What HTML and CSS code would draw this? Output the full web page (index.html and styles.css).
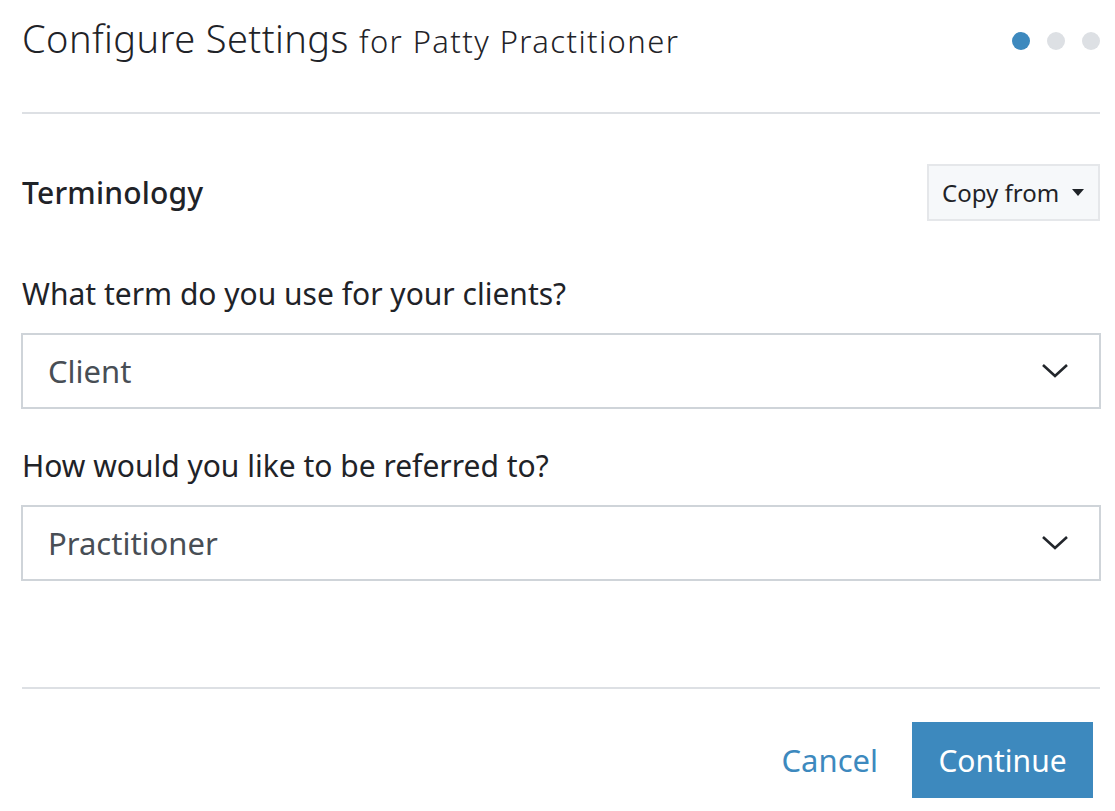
FILE: index.html
```html
<!DOCTYPE html>
<html>
<head>
<meta charset="utf-8">
<link rel="stylesheet" href="styles.css">
</head>
<body>
<div class="modal">
  <header class="head">
    <h1 class="title">Configure Settings <span class="sub">for Patty Practitioner</span></h1>
    <div class="dots"><span class="dot active"></span><span class="dot"></span><span class="dot"></span></div>
  </header>
  <hr class="rule">
  <section class="body">
    <div class="section-head">
      <h2 class="section-title">Terminology</h2>
      <button class="copy">Copy from <span class="caret"></span></button>
    </div>
    <label class="label">What term do you use for your clients?</label>
    <div class="select"><span>Client</span>
      <svg class="chev" width="28" height="16" viewBox="0 0 28 16"><path d="M2 2 L14 13 L26 2" fill="none" stroke="#22262b" stroke-width="2.6"/></svg>
    </div>
    <label class="label second">How would you like to be referred to?</label>
    <div class="select"><span>Practitioner</span>
      <svg class="chev" width="28" height="16" viewBox="0 0 28 16"><path d="M2 2 L14 13 L26 2" fill="none" stroke="#22262b" stroke-width="2.6"/></svg>
    </div>
  </section>
  <hr class="rule bottom">
  <footer class="foot">
    <button class="cancel">Cancel</button>
    <button class="continue">Continue</button>
  </footer>
</div>
</body>
</html>
```
FILE: styles.css
```css
* { box-sizing: border-box; }
body { margin: 0; background: #fff; font-family: "Noto Sans", "Open Sans", sans-serif; color: #1f2328; }
.modal { padding: 0 14px 0 21px; width: 1115px; }
.head { display: flex; justify-content: space-between; align-items: center; height: 82px; }
.title { margin: 0 0 4px 1px; font-weight: 300; font-size: 38px; line-height: 46px; color: #1f2328; letter-spacing: 0.4px; white-space: nowrap; }
.sub { font-size: 31px; letter-spacing: 1.4px; }
.dots { display: flex; gap: 17px; padding-right: 1px; }
.dot { width: 18px; height: 18px; border-radius: 50%; background: #dde0e4; }
.dot.active { background: #3d89be; }
.rule { margin: 30px 0 0 1px; border: 0; border-top: 2px solid #dde0e4; width: 1078px; }
.rule.bottom { margin-top: 0; }
.body { padding-top: 49px; height: 573px; }
.section-head { display: flex; justify-content: space-between; align-items: center; height: 58px; }
.section-title { margin: 0 0 0 1px; font-size: 30px; font-weight: 500; letter-spacing: 0.2px; }
.copy { font-family: inherit; font-size: 24px; color: #1f2328; background: #f6f8fa; border: 2px solid #e5e7ea; height: 57px; width: 173px; display: flex; align-items: center; justify-content: space-between; white-space: nowrap; padding: 0 14px 0 13px; margin-right: 1px; }
.caret { width: 0; height: 0; border-left: 6px solid transparent; border-right: 6px solid transparent; border-top: 7px solid #1f2328; }
.label { display: block; font-size: 30px; line-height: 40px; margin: 53px 0 19px 1px; }
.label.second { margin-top: 37px; }
.select { display: flex; justify-content: space-between; align-items: center; height: 76px; border: 2px solid #cfd4d9; padding: 0 30px 0 25px; font-size: 31px; color: #484e55; }
.foot { display: flex; justify-content: flex-end; align-items: center; gap: 34px; padding-top: 33px; padding-right: 8px; }
.cancel { font-family: inherit; font-size: 31px; color: #3d89be; background: none; border: 0; padding: 0; }
.continue { font-family: inherit; font-size: 30px; color: #fff; background: #3d89be; border: 0; width: 181px; height: 76px; padding: 0; }
```
